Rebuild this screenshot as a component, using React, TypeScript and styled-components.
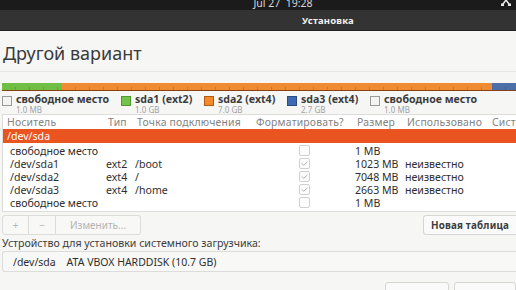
import React from 'react'
import styled, { createGlobalStyle } from 'styled-components'

const GlobalStyle = createGlobalStyle`
  html, body {
    margin: 0;
    padding: 0;
    width: 516px;
    height: 290px;
    overflow: hidden;
    background: #f6f6f5;
  }
  body {
    font-family: 'Noto Sans', 'DejaVu Sans', sans-serif;
    color: #3c3c3c;
  }
`

const Screen = styled.div`
  width: 516px;
  height: 290px;
  overflow: hidden;
  display: flex;
  flex-direction: column;
`

const TopBar = styled.div`
  height: 10px;
  flex: none;
  background: #1b1b1b;
  color: #d8d8d8;
  font-size: 10.5px;
  line-height: 7px;
  display: flex;
  justify-content: center;
  padding-left: 50px;
  position: relative;
  overflow: hidden;
`

const TrayIcon = styled.svg`
  position: absolute;
  right: 4px;
  top: 0;
`

const TitleBar = styled.div`
  height: 20px;
  flex: none;
  background: #333333;
  border-bottom: 1px solid #1f1f1f;
  color: #f2f2f2;
  font-size: 9.5px;
  font-weight: 700;
  display: flex;
  align-items: center;
  justify-content: center;
  padding-left: 140px;
  letter-spacing: 0.2px;
`

const Body = styled.div`
  flex: 1;
  padding: 0 0 0 2px;
  display: flex;
  flex-direction: column;
`

const Heading = styled.h1`
  margin: 11px 0 0 1px;
  font-size: 18px;
  font-weight: 400;
  line-height: 22px;
  color: #3a3a3a;
`

const Rule = styled.div`
  margin-top: 7px;
  height: 1px;
  background: #e6e6e4;
  margin-left: -2px;
`

const DiskBar = styled.div`
  margin-top: 11px;
  height: 7px;
  display: flex;
  border-bottom: 1px solid #8a3f10;
  margin-right: -2px;
`

const Segment = styled.div<{ $w: number; $c: string }>`
  width: ${p => p.$w}px;
  flex: none;
  background-color: ${p => p.$c};
  background-image: repeating-linear-gradient(
    90deg,
    transparent 0 13px,
    rgba(0, 0, 0, 0.14) 13px 14px
  );
  background-size: 100% 3px;
  background-position: bottom;
  background-repeat: no-repeat;
`

const Legend = styled.div`
  display: flex;
  margin-top: 2px;
  height: 20px;
`

const LegendItem = styled.div<{ $w: number }>`
  width: ${p => p.$w}px;
  flex: none;
  display: flex;
  gap: 4px;
`

const Swatch = styled.div<{ $c: string; $b: string }>`
  width: 8px;
  height: 8px;
  margin-top: 3px;
  background: ${p => p.$c};
  border: 1px solid ${p => p.$b};
  flex: none;
`

const LegendText = styled.div`
  display: flex;
  flex-direction: column;
`

const LegendName = styled.span`
  font-size: 10.6px;
  font-weight: 700;
  line-height: 12px;
  color: #3c3c3c;
  white-space: nowrap;
`

const LegendSize = styled.span`
  font-size: 8px;
  line-height: 9px;
  color: #a2a2a2;
`

const TableBox = styled.div`
  margin-top: 1px;
  height: 96px;
  background: #ffffff;
  border: 1px solid #dcdcda;
  border-right: none;
  margin-right: -2px;
  overflow: hidden;
`

const columns = '102px 29px 119px 101px 50px 85px 60px'

const HeaderRow = styled.div`
  display: grid;
  grid-template-columns: ${columns};
  height: 14px;
  align-items: center;
  font-size: 10.4px;
  color: #828282;
  white-space: nowrap;
  letter-spacing: 0.2px;
`

const HeaderCell = styled.span<{ $pad?: number }>`
  padding-left: ${p => p.$pad ?? 3}px;
  overflow: hidden;
`

const Row = styled.div<{ $selected?: boolean }>`
  display: grid;
  grid-template-columns: ${columns};
  height: ${p => (p.$selected ? 14 : 13)}px;
  align-items: center;
  font-size: 10.6px;
  white-space: nowrap;
  background: ${p => (p.$selected ? '#e95420' : 'transparent')};
  color: ${p => (p.$selected ? '#ffffff' : '#2e2e2e')};
  margin-bottom: ${p => (p.$selected ? 1 : 0)}px;
`

const Cell = styled.span<{ $pad?: number; $center?: boolean }>`
  padding-left: ${p => p.$pad ?? 1}px;
  display: flex;
  justify-content: ${p => (p.$center ? 'center' : 'flex-start')};
  overflow: hidden;
`

const Check = styled.span`
  width: 9px;
  height: 9px;
  border: 1px solid #cfcfcf;
  border-radius: 2px;
  background: #fdfdfd;
  display: flex;
  align-items: center;
  justify-content: center;
`

const Toolbar = styled.div`
  margin-top: 3px;
  display: flex;
  justify-content: space-between;
  height: 20px;
`

const ButtonGroup = styled.div`
  display: flex;
`

const ToolButton = styled.div<{ $w: number; $first?: boolean; $last?: boolean }>`
  width: ${p => p.$w}px;
  height: 18px;
  border: 1px solid #dcdcda;
  border-left-width: ${p => (p.$first ? 1 : 0)}px;
  border-radius: ${p =>
    p.$first ? '3px 0 0 3px' : p.$last ? '0 3px 3px 0' : '0'};
  background: #f8f8f7;
  color: #b4b4b4;
  font-size: 10px;
  display: flex;
  align-items: center;
  justify-content: center;
`

const Button = styled.div<{ $w: number }>`
  width: ${p => p.$w}px;
  height: 18px;
  border: 1px solid #d6d6d4;
  border-right: none;
  border-radius: 3px 0 0 3px;
  background: #fafafa;
  color: #3c3c3c;
  font-size: 9.8px;
  font-weight: 700;
  display: flex;
  align-items: center;
  justify-content: center;
  letter-spacing: 0.2px;
`

const Label = styled.div`
  margin-top: 1px;
  font-size: 10.6px;
  line-height: 14px;
  color: #3c3c3c;
  white-space: nowrap;
`

const Combo = styled.div`
  margin-top: 1px;
  height: 19px;
  border: 1px solid #dcdcda;
  border-right: none;
  border-radius: 3px 0 0 3px;
  background: #f8f8f7;
  display: flex;
  align-items: center;
  padding-left: 10px;
  font-size: 10.5px;
  color: #2e2e2e;
  white-space: pre;
`

const Footer = styled.div`
  margin-top: 10px;
  display: flex;
  justify-content: flex-end;
  gap: 5px;
`

const FooterButton = styled.div<{ $w: number }>`
  width: ${p => p.$w}px;
  height: 18px;
  border: 1px solid #d6d6d4;
  border-radius: 3px;
  background: #fafafa;
`

type Part = {
  dev: string
  type?: string
  mount?: string
  format?: boolean | null
  size: string
  used?: string
}

const parts: Part[] = [
  { dev: 'свободное место', format: null, size: '1 MB' },
  { dev: '/dev/sda1', type: 'ext2', mount: '/boot', format: true, size: '1023 MB', used: 'неизвестно' },
  { dev: '/dev/sda2', type: 'ext4', mount: '/', format: true, size: '7048 MB', used: 'неизвестно' },
  { dev: '/dev/sda3', type: 'ext4', mount: '/home', format: true, size: '2663 MB', used: 'неизвестно' },
  { dev: 'свободное место', format: null, size: '1 MB' },
]

const legend = [
  { name: 'свободное место', size: '1.0 MB', c: '#f4f4f4', b: '#9a9a9a', w: 119 },
  { name: 'sda1 (ext2)', size: '1.0 GB', c: '#73c24a', b: '#4f9a2c', w: 83 },
  { name: 'sda2 (ext4)', size: '7.0 GB', c: '#f08a2c', b: '#b55a10', w: 83 },
  { name: 'sda3 (ext4)', size: '2.7 GB', c: '#3f69b0', b: '#2a4b86', w: 83 },
  { name: 'свободное место', size: '1.0 MB', c: '#f4f4f4', b: '#9a9a9a', w: 140 },
]

const CheckMark = () => (
  <svg width="7" height="5" viewBox="0 0 7 5">
    <path d="M0.5 2.3 L2.8 4.2 L6.5 0.8" fill="none" stroke="#a8a8a8" strokeWidth="0.9" />
  </svg>
)

export default function App() {
  return (
    <Screen>
      <GlobalStyle />
      <TopBar>
        <span>Jul 27&nbsp;&nbsp;19:28</span>
        <TrayIcon width="12" height="6" viewBox="0 0 12 6">
          <path d="M6 0 L3 4 M6 0 L9 4" stroke="#e8e8e8" strokeWidth="1.5" />
          <rect x="1" y="3.5" width="3" height="2.5" fill="#e8e8e8" />
          <rect x="8" y="3.5" width="3" height="2.5" fill="#e8e8e8" />
        </TrayIcon>
      </TopBar>
      <TitleBar>Установка</TitleBar>
      <Body>
        <Heading>Другой вариант</Heading>
        <Rule />
        <DiskBar>
          <Segment $w={60} $c="#6fbf45" />
          <Segment $w={430} $c="#ef8b32" />
          <Segment $w={26} $c="#4b6fa8" />
        </DiskBar>
        <Legend>
          {legend.map((l, i) => (
            <LegendItem key={i} $w={l.w}>
              <Swatch $c={l.c} $b={l.b} />
              <LegendText>
                <LegendName>{l.name}</LegendName>
                <LegendSize>{l.size}</LegendSize>
              </LegendText>
            </LegendItem>
          ))}
        </Legend>
        <TableBox>
          <HeaderRow>
            <HeaderCell $pad={4}>Носитель</HeaderCell>
            <HeaderCell $pad={3}>Тип</HeaderCell>
            <HeaderCell>Точка подключения</HeaderCell>
            <HeaderCell>Форматировать?</HeaderCell>
            <HeaderCell>Размер</HeaderCell>
            <HeaderCell>Использовано</HeaderCell>
            <HeaderCell>Система</HeaderCell>
          </HeaderRow>
          <Row $selected>
            <Cell $pad={4}>/dev/sda</Cell>
          </Row>
          {parts.map((p, i) => (
            <Row key={i}>
              <Cell $pad={7}>{p.dev}</Cell>
              <Cell>{p.type}</Cell>
              <Cell>{p.mount}</Cell>
              <Cell $center>
                <Check>{p.format && <CheckMark />}</Check>
              </Cell>
              <Cell>{p.size}</Cell>
              <Cell>{p.used}</Cell>
              <Cell />
            </Row>
          ))}
        </TableBox>
        <Toolbar>
          <ButtonGroup>
            <ToolButton $w={25} $first>+</ToolButton>
            <ToolButton $w={26}>−</ToolButton>
            <ToolButton $w={84} $last>Изменить...</ToolButton>
          </ButtonGroup>
          <Button $w={92}>Новая таблица</Button>
        </Toolbar>
        <Label>Устройство для установки системного загрузчика:</Label>
        <Combo>{'/dev/sda    ATA VBOX HARDDISK (10.7 GB)'}</Combo>
        <Footer>
          <FooterButton $w={62} />
          <FooterButton $w={60} />
        </Footer>
      </Body>
    </Screen>
  )
}
